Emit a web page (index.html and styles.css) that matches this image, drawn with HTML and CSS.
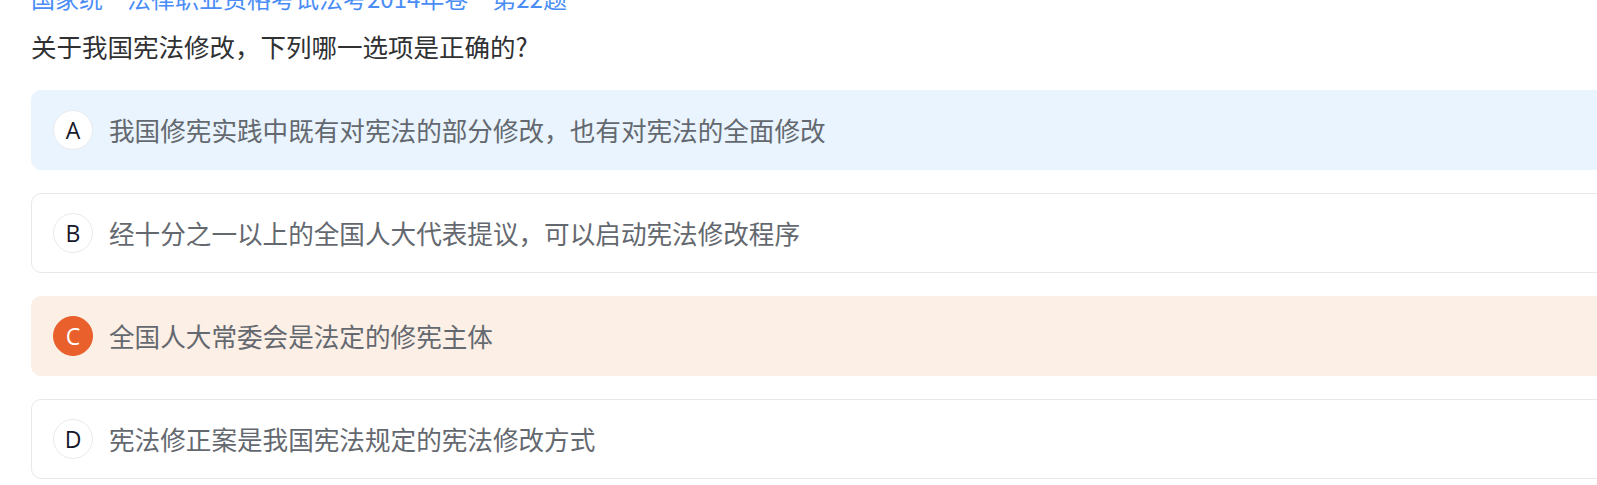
FILE: index.html
```html
<!DOCTYPE html>
<html lang="zh-CN">
<head>
<meta charset="utf-8">
<title>题目</title>
<link rel="stylesheet" href="styles.css">
</head>
<body>
<div class="page">
  <div class="source">国家统一法律职业资格考试法考2014年卷一第22题</div>
  <div class="question">关于我国宪法修改，下列哪一选项是正确的?</div>
  <div class="options">
    <div class="option option-selected">
      <span class="letter">A</span>
      <span class="text">我国修宪实践中既有对宪法的部分修改，也有对宪法的全面修改</span>
    </div>
    <div class="option">
      <span class="letter">B</span>
      <span class="text">经十分之一以上的全国人大代表提议，可以启动宪法修改程序</span>
    </div>
    <div class="option option-wrong">
      <span class="letter">C</span>
      <span class="text">全国人大常委会是法定的修宪主体</span>
    </div>
    <div class="option">
      <span class="letter">D</span>
      <span class="text">宪法修正案是我国宪法规定的宪法修改方式</span>
    </div>
  </div>
</div>
</body>
</html>
```
FILE: styles.css
```css
html, body {
  margin: 0;
  padding: 0;
  background: #ffffff;
  overflow: hidden;
}

body {
  font-family: "Noto Sans CJK SC", "Noto Sans", sans-serif;
}

.page {
  width: 1620px;
  padding-left: 31px;
  margin-top: -18px;
}

.source {
  font-size: 24px;
  line-height: 32px;
  color: #4b8df6;
  white-space: nowrap;
}

.question {
  margin-top: 14px;
  font-size: 25.5px;
  line-height: 36px;
  color: #303133;
}

.options {
  margin-top: 26px;
  display: flex;
  flex-direction: column;
  gap: 23px;
}

.option {
  box-sizing: border-box;
  height: 80px;
  display: flex;
  align-items: center;
  padding-left: 21px;
  border: 1px solid #e6e8eb;
  border-radius: 10px;
  background: #ffffff;
}

.option-selected {
  background: #e9f4fe;
  border-color: #e9f4fe;
}

.option-wrong {
  background: #fcefe6;
  border-color: #fcefe6;
}

.letter {
  box-sizing: border-box;
  width: 40px;
  height: 40px;
  flex: none;
  display: flex;
  align-items: center;
  justify-content: center;
  border: 1px solid #e8eaee;
  border-radius: 50%;
  background: #ffffff;
  font-family: "Open Sans", "Noto Sans", sans-serif;
  font-size: 23px;
  color: #15172a;
}

.option-wrong .letter {
  background: #e9602c;
  border-color: #e9602c;
  color: #ffffff;
}

.text {
  margin-left: 16px;
  font-size: 25.6px;
  line-height: 36px;
  color: #64686f;
  white-space: nowrap;
}
```
